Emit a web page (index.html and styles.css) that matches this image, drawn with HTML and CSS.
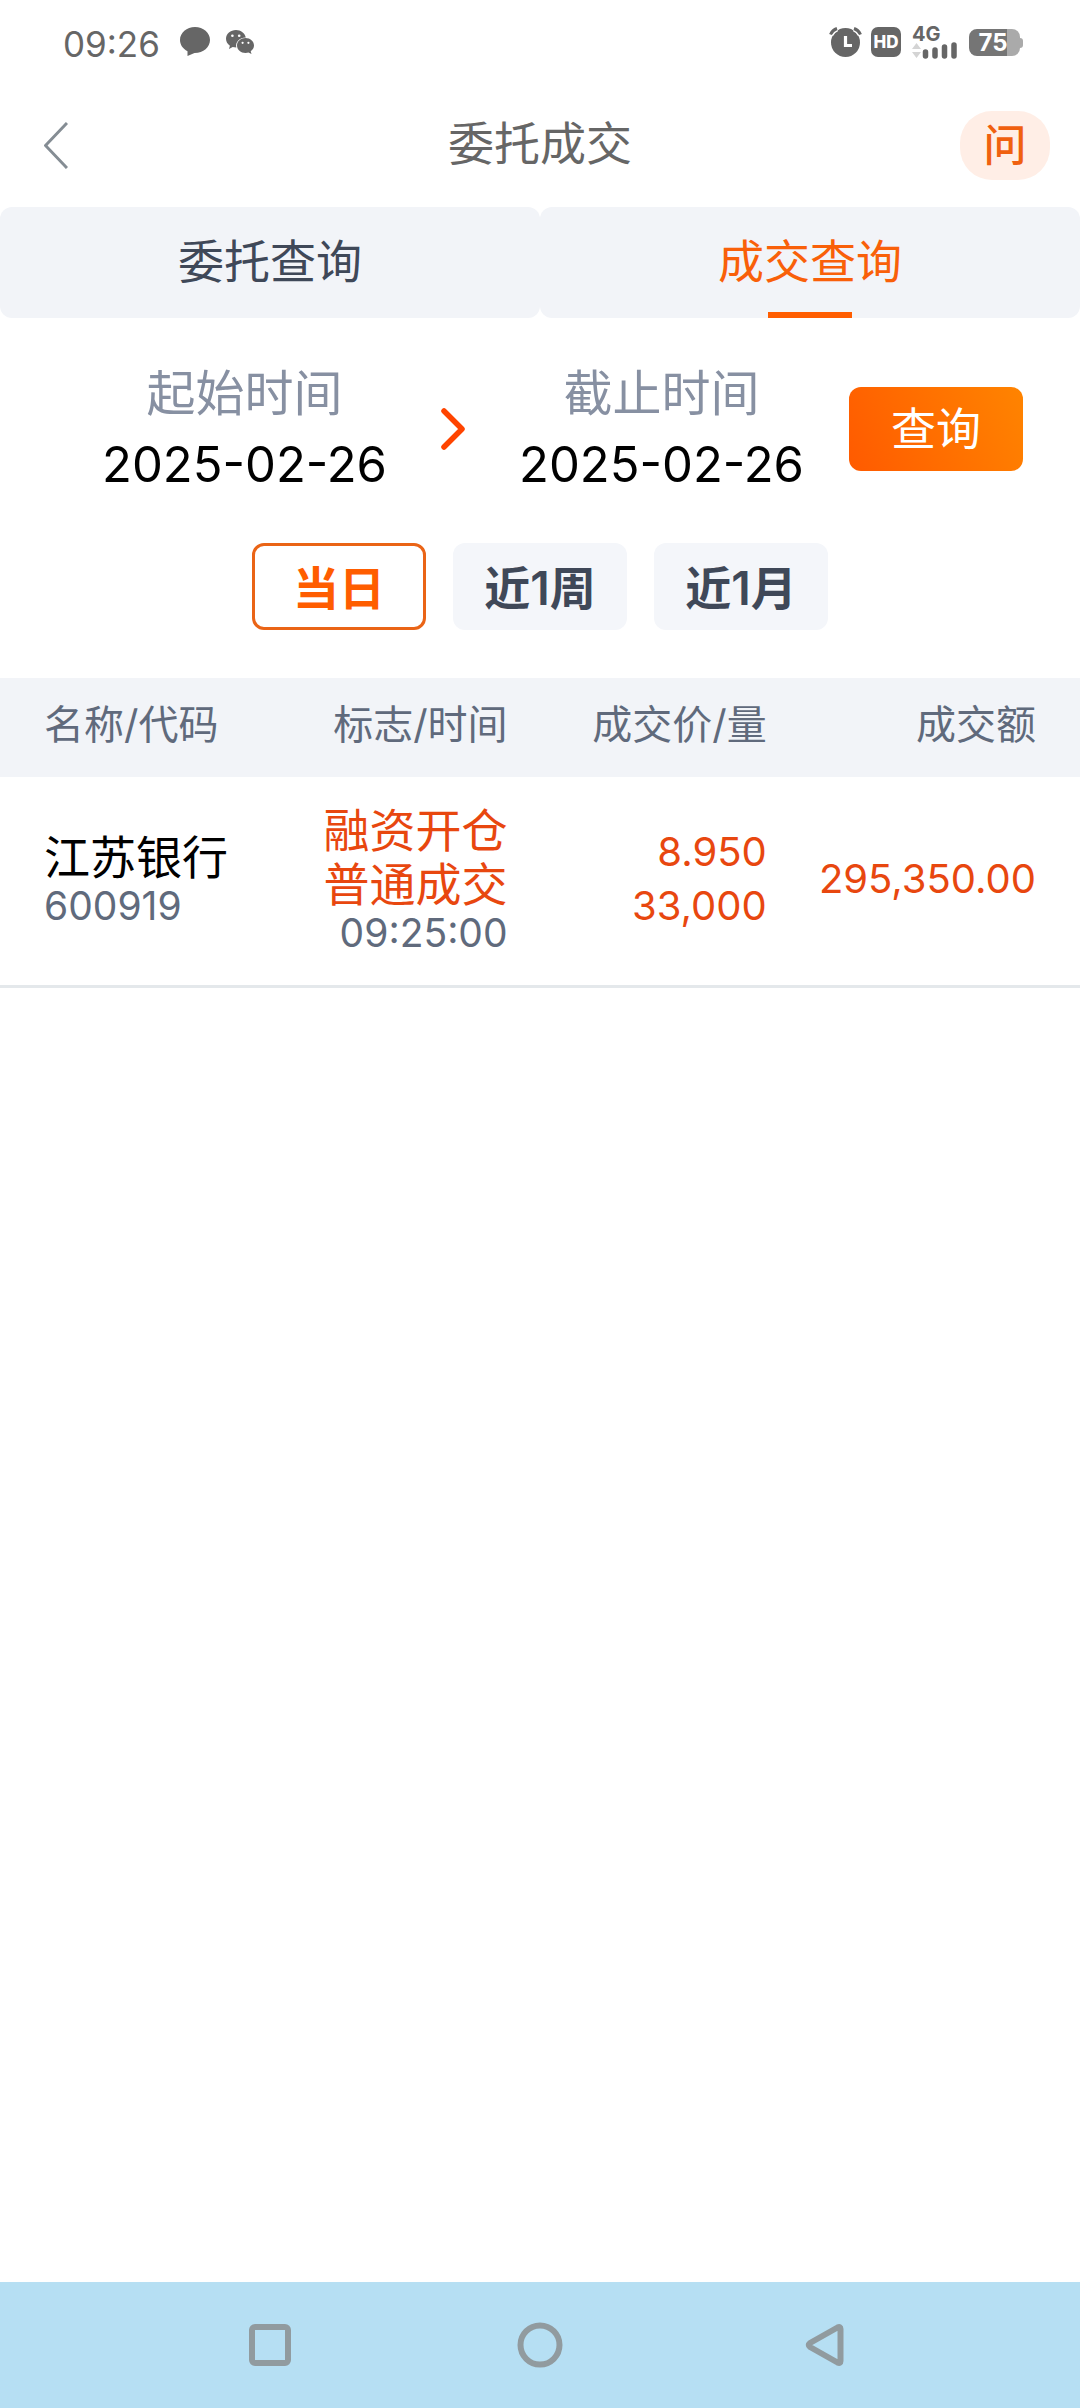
FILE: index.html
```html
<!DOCTYPE html>
<html lang="zh-CN">
<head>
<meta charset="utf-8">
<meta name="viewport" content="width=device-width, initial-scale=1">
<title>委托成交</title>
<link rel="stylesheet" href="styles.css">
</head>
<body>
<div class="status-bar">
  <div class="status-left">
    <span class="clock">09:26</span>
    <svg class="icon-chat" width="30" height="30" viewBox="0 0 30 30" fill="currentColor" aria-hidden="true"><path d="M15 0C6.700 0 0 5.800 0 13c0 4.600 2.800 8.800 7.500 11.200V29l7-3.100C23.300 26 30 20.200 30 13S23.300 0 15 0z"/></svg>
    <svg width="28" height="24" viewBox="0 0 28 24" aria-hidden="true">
      <path fill="currentColor" d="M10 0C4.500 0 0 3.900 0 8.800c0 2.900 1.500 5.300 3.900 6.900L3 19l3.700-2c1 .3 2.200.5 3.600.5C9.200 12 13.500 7.500 19.800 7.500 19 3.200 14.900 0 10 0z"/>
      <path fill="currentColor" d="M19.500 8C14.800 8 11 11.300 11 15.500S14.800 23 19.500 23c1.100 0 2.100-.2 3-.5l3 1.500-.8-2.800c2-1.300 3.300-3.400 3.300-5.700C28 11.300 24.200 8 19.500 8z"/>
      <g fill="#fff"><circle cx="6.400" cy="5.800" r="1.300"/><circle cx="13.200" cy="5.800" r="1.300"/><circle cx="16.600" cy="12.800" r="1.100"/><circle cx="22.400" cy="12.800" r="1.100"/></g>
    </svg>
  </div>
  <div class="status-right">
    <svg width="33" height="30" viewBox="0 0 33 30" aria-hidden="true">
      <circle cx="16.500" cy="15.500" r="14.500" fill="currentColor"/>
      <path d="M16.500 9v9.500H23" fill="none" stroke="#fff" stroke-width="3.200"/>
      <path d="M1.500 7.500Q3.500 3 8 1.500M31.500 7.500Q29.500 3 25 1.500" fill="none" stroke="#fff" stroke-width="6"/>
      <path d="M1.500 7.500Q3.500 3 8 1.500M31.500 7.500Q29.500 3 25 1.500" fill="none" stroke="currentColor" stroke-width="3"/>
    </svg>
    <span class="hd">HD</span>
    <div class="signal">
      <span class="network">4G</span>
      <svg width="45" height="17" viewBox="0 0 45 17" aria-hidden="true">
        <path d="M0 7l4.500-6L9 7zM0 10l4.500 6L9 10z" fill="#d4d4d4"/>
        <path d="M13.500 10v4M23 8v6M32.500 5v9M42 3v11" stroke="currentColor" stroke-width="5.500" stroke-linecap="round"/>
      </svg>
    </div>
    <div class="battery"><span class="battery-level">75</span></div>
  </div>
</div>

<header class="header">
  <button class="back" type="button" aria-label="返回">
    <svg width="24" height="47" viewBox="0 0 24 47" fill="none" stroke="currentColor" stroke-width="3" aria-hidden="true"><path d="M23 1L1.500 23.500 23 46"/></svg>
  </button>
  <h1 class="title">委托成交</h1>
  <button class="ask" type="button">问</button>
</header>

<nav class="tabs">
  <a class="tab" href="#orders">委托查询</a>
  <a class="tab tab-active" href="#deals" aria-current="page">成交查询</a>
</nav>

<main>
  <form class="range">
    <div class="field">
      <label class="field-label" for="start">起始时间</label>
      <input class="field-date" id="start" type="text" value="2025-02-26" readonly>
    </div>
    <svg class="arrow" width="42" height="44" viewBox="0 0 42 44" fill="none" stroke="#ff4400" stroke-width="5.500" stroke-linecap="round" stroke-linejoin="round" aria-hidden="true"><path d="M12 4l18 18-18 18"/></svg>
    <div class="field">
      <label class="field-label" for="end">截止时间</label>
      <input class="field-date" id="end" type="text" value="2025-02-26" readonly>
    </div>
    <button class="submit" type="button">查询</button>
  </form>

  <div class="presets">
    <button class="preset preset-active" type="button">当日</button>
    <button class="preset" type="button">近1周</button>
    <button class="preset" type="button">近1月</button>
  </div>

  <table class="deals" id="deals">
    <thead>
      <tr>
        <th class="col-name">名称/代码</th>
        <th class="col-flag">标志/时间</th>
        <th class="col-price">成交价/量</th>
        <th class="col-amount">成交额</th>
      </tr>
    </thead>
    <tbody>
      <tr>
        <td class="col-name"><div class="name">江苏银行</div><div class="sub">600919</div></td>
        <td class="col-flag"><div class="flag">融资开仓</div><div class="flag">普通成交</div><div class="sub">09:25:00</div></td>
        <td class="col-price"><div class="number">8.950</div><div class="number">33,000</div></td>
        <td class="col-amount"><div class="number">295,350.00</div></td>
      </tr>
    </tbody>
  </table>
</main>

<footer class="system-nav">
  <button class="system-key" type="button" aria-label="最近任务">
    <svg width="48" height="48" viewBox="0 0 48 48" aria-hidden="true"><rect x="6" y="6" width="36" height="36" rx="3"/></svg>
  </button>
  <button class="system-key" type="button" aria-label="主页">
    <svg width="48" height="48" viewBox="0 0 48 48" aria-hidden="true"><circle cx="24" cy="24" r="19.500"/></svg>
  </button>
  <button class="system-key" type="button" aria-label="返回上一级">
    <svg width="72" height="48" viewBox="0 0 72 48" aria-hidden="true"><path d="M66.500 8v32q0 3-3 1.500L36 26q-2.500-2 0-4L63.500 6.500q3-1.500 3 1.500z"/></svg>
  </button>
</footer>
</body>
</html>
```
FILE: styles.css
```css
* {
  box-sizing: border-box;
}

body {
  margin: 0;
  min-height: 100vh;
  display: flex;
  flex-direction: column;
  background: #fff;
  color: #000;
  font-family: Inter, "Noto Sans CJK SC", sans-serif;
}

button,
input {
  margin: 0;
  padding: 0;
  border: 0;
  background: none;
  color: inherit;
  font: inherit;
}

svg {
  display: block;
}

.status-bar {
  display: flex;
  justify-content: space-between;
  align-items: center;
  height: 84px;
  padding: 0 60px 0 63px;
  color: #666;
}

.status-left {
  display: flex;
  align-items: center;
  gap: 16px;
}

.clock {
  margin-right: 4px;
  padding-top: 4px;
  font-size: 35px;
  line-height: 44px;
}

.status-right {
  display: flex;
  align-items: center;
  gap: 9px;
}

.hd {
  width: 30px;
  border-radius: 7px;
  background: #666;
  color: #fff;
  font-size: 17px;
  font-weight: 800;
  line-height: 30px;
  text-align: center;
}

.signal {
  width: 48px;
  margin-left: 2px;
}

.network {
  display: block;
  font-size: 20px;
  font-weight: 700;
  line-height: 16px;
}

.battery {
  position: relative;
  width: 51px;
  border-radius: 8px;
  background: linear-gradient(90deg, #757575 75%, #aaa 75%);
}

.battery::after {
  content: "";
  position: absolute;
  top: 9px;
  left: 100%;
  width: 3px;
  height: 10px;
  border-radius: 0 3px 3px 0;
  background: #aaa;
}

.battery-level {
  display: block;
  padding-right: 3px;
  color: #fff;
  font-size: 24px;
  font-weight: 700;
  line-height: 27px;
  text-align: center;
}

.header {
  display: grid;
  grid-template-columns: 1fr auto 1fr;
  align-items: center;
  height: 123px;
  padding: 0 30px;
}

.back {
  justify-self: start;
  margin-left: 14px;
  color: #858d94;
}

.title {
  margin: 0;
  padding-bottom: 6px;
  color: #666;
  font-size: 46px;
  font-weight: 400;
  line-height: 60px;
}

.ask {
  justify-self: end;
  width: 90px;
  height: 69px;
  padding-bottom: 8px;
  border-radius: 32px;
  background: #ffeee6;
  color: #f0600f;
  font-size: 43px;
  font-weight: 500;
}

.tabs {
  display: grid;
  grid-template-columns: 1fr 1fr;
}

.tab {
  display: flex;
  flex-direction: column;
  align-items: center;
  height: 111px;
  border-radius: 12px;
  background: #f2f4f8;
  color: #3f4858;
  font-size: 46px;
  line-height: 108px;
  text-decoration: none;
}

.tab-active {
  color: #f96009;
}

.tab-active::after {
  content: "";
  width: 84px;
  height: 6px;
  margin-top: -3px;
  background: #ff5d00;
}

.range {
  display: flex;
  align-items: center;
  gap: 45px;
  padding: 41px 57px 44px 102px;
}

.field {
  flex: 1;
  min-width: 0;
  display: flex;
  flex-direction: column;
  align-items: center;
}

.field-label {
  color: #8790a2;
  font-size: 49px;
  line-height: 70px;
}

.field-date {
  width: 100%;
  height: 70px;
  font-size: 49px;
  text-align: center;
}

.arrow {
  flex: none;
}

.submit {
  flex: none;
  width: 174px;
  height: 84px;
  padding-bottom: 5px;
  border-radius: 12px;
  background: linear-gradient(65deg, #ff5a00, #ff8400);
  color: #fff;
  font-size: 45px;
}

.presets {
  display: flex;
  justify-content: center;
  gap: 27px;
  padding-bottom: 48px;
}

.preset {
  width: 174px;
  height: 87px;
  padding-bottom: 3px;
  border-radius: 12px;
  background: #f4f6fa;
  color: #3f4858;
  font-size: 46px;
  font-weight: 600;
}

.preset-active {
  border: 3px solid #ea6416;
  background: #fff;
  color: #ff5d00;
}

.deals {
  width: 100%;
  border-collapse: collapse;
  table-layout: fixed;
}

.deals th {
  height: 99px;
  padding: 0 0 6px;
  background: #f2f4f8;
  color: #606a7c;
  font-size: 40px;
  font-weight: 400;
  line-height: 54px;
  text-align: right;
}

.deals td {
  height: 209px;
  padding: 0 0 4px;
  border-bottom: 3px solid #e4e8eb;
  text-align: right;
}

.deals .col-name {
  width: 24%;
  padding-left: 44px;
  text-align: left;
}

.deals .col-flag {
  width: 23%;
}

.deals .col-price {
  width: 24%;
}

.deals .col-amount {
  width: 29%;
  padding-right: 44px;
}

.name,
.flag {
  font-size: 46px;
  line-height: 54px;
}

.flag,
.number {
  color: #e8470f;
}

.number {
  font-size: 40px;
  line-height: 54px;
}

.sub {
  color: #606a7c;
  font-size: 39px;
  line-height: 43px;
}

.system-nav {
  display: grid;
  grid-template-columns: repeat(3, 1fr);
  height: 126px;
  margin-top: auto;
  padding: 0 12.5%;
  background: #b6dff3;
}

.system-key {
  display: flex;
  justify-content: center;
  align-items: center;
}

.system-key svg {
  fill: none;
  stroke: #919b9f;
  stroke-width: 6px;
  stroke-linejoin: round;
}
```
